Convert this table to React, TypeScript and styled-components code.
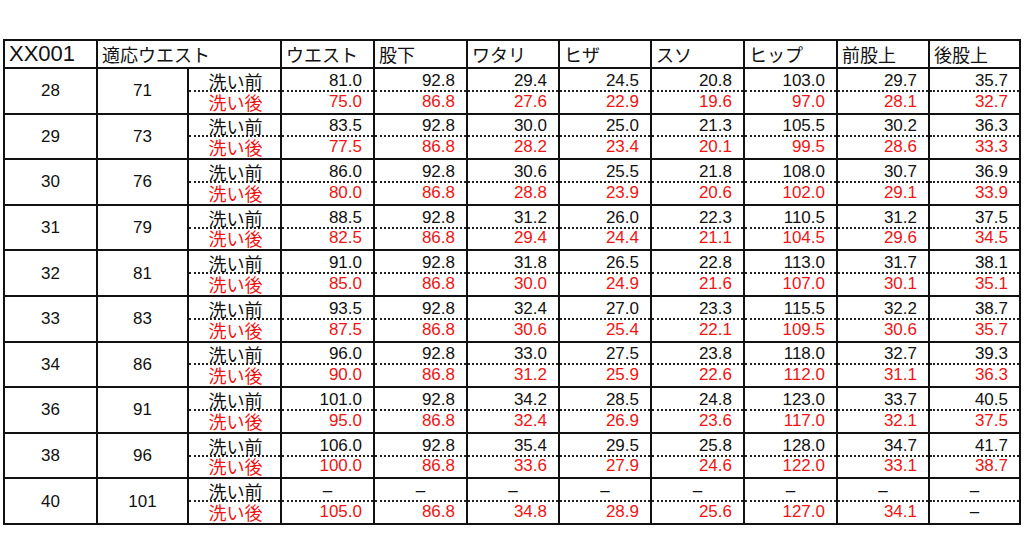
import React from "react"
import styled, {createGlobalStyle} from "styled-components"

const GlobalStyle = createGlobalStyle`
  html, body {
    margin: 0;
    padding: 0;
    background: #fff;
  }
  body {
    font-family: "Liberation Sans", "Noto Sans CJK JP", sans-serif;
    color: #111;
  }
`

const Page = styled.div`
  width: 1024px;
  height: 555px;
  padding: 39px 0 0 3px;
  box-sizing: border-box;
  background: #fff;
  overflow: hidden;
`

const Sheet = styled.table`
  width: 1016px;
  table-layout: fixed;
  border-collapse: collapse;
  border: 2px solid #111;
`

const HeadRow = styled.tr`
  height: 28px;
`

const SubRow = styled.tr`
  height: 22.8px;
`

const HeadCell = styled.th<{$big?: boolean}>`
  border: 2px solid #111;
  padding: 0 0 0 ${(p) => (p.$big ? 4 : 4)}px;
  text-align: left;
  vertical-align: middle;
  font-weight: normal;
  font-family: ${(p) =>
    p.$big
      ? `"Liberation Sans", "Noto Sans CJK JP", sans-serif`
      : `"Noto Sans CJK JP", sans-serif`};
  font-size: ${(p) => (p.$big ? 22 : 18)}px;
  line-height: 1;
  white-space: nowrap;
  overflow: hidden;
  color: #111;
`

const SizeCell = styled.td`
  border: 2px solid #111;
  padding: 0;
  text-align: center;
  vertical-align: middle;
  font-size: 17px;
  line-height: 1;
  color: #111;
`

const LabelCell = styled.td<{$after?: boolean}>`
  border-left: 2px solid #111;
  border-right: 2px solid #111;
  border-top: ${(p) => (p.$after ? "none" : "2px solid #111")};
  border-bottom: ${(p) => (p.$after ? "2px solid #111" : "2px dotted #222")};
  padding: 0 0 ${(p) => (p.$after ? 2 : 0)}px 2px;
  text-align: center;
  vertical-align: bottom;
  font-family: "Noto Sans CJK JP", sans-serif;
  font-size: 18px;
  line-height: 1;
  white-space: nowrap;
  color: ${(p) => (p.$after ? "#f01414" : "#111")};
`

const ValueCell = styled.td<{$after?: boolean; $dash?: boolean}>`
  border-left: 2px solid #111;
  border-right: 2px solid #111;
  border-top: ${(p) => (p.$after ? "none" : "2px solid #111")};
  border-bottom: ${(p) => (p.$after ? "2px solid #111" : "2px dotted #222")};
  padding: 0 ${(p) => (p.$dash ? 0 : 11)}px ${(p) => (p.$after ? 3 : 1)}px 0;
  text-align: ${(p) => (p.$dash ? "center" : "right")};
  vertical-align: bottom;
  font-size: 17px;
  line-height: 1;
  color: ${(p) => (p.$after && !p.$dash ? "#f01414" : "#111")};
`

const headers = ["ウエスト", "股下", "ワタリ", "ヒザ", "スソ", "ヒップ", "前股上", "後股上"]

type Group = {
  size: string
  waist: string
  before: string[]
  after: string[]
}

const groups: Group[] = [
  {size: "28", waist: "71", before: ["81.0", "92.8", "29.4", "24.5", "20.8", "103.0", "29.7", "35.7"], after: ["75.0", "86.8", "27.6", "22.9", "19.6", "97.0", "28.1", "32.7"]},
  {size: "29", waist: "73", before: ["83.5", "92.8", "30.0", "25.0", "21.3", "105.5", "30.2", "36.3"], after: ["77.5", "86.8", "28.2", "23.4", "20.1", "99.5", "28.6", "33.3"]},
  {size: "30", waist: "76", before: ["86.0", "92.8", "30.6", "25.5", "21.8", "108.0", "30.7", "36.9"], after: ["80.0", "86.8", "28.8", "23.9", "20.6", "102.0", "29.1", "33.9"]},
  {size: "31", waist: "79", before: ["88.5", "92.8", "31.2", "26.0", "22.3", "110.5", "31.2", "37.5"], after: ["82.5", "86.8", "29.4", "24.4", "21.1", "104.5", "29.6", "34.5"]},
  {size: "32", waist: "81", before: ["91.0", "92.8", "31.8", "26.5", "22.8", "113.0", "31.7", "38.1"], after: ["85.0", "86.8", "30.0", "24.9", "21.6", "107.0", "30.1", "35.1"]},
  {size: "33", waist: "83", before: ["93.5", "92.8", "32.4", "27.0", "23.3", "115.5", "32.2", "38.7"], after: ["87.5", "86.8", "30.6", "25.4", "22.1", "109.5", "30.6", "35.7"]},
  {size: "34", waist: "86", before: ["96.0", "92.8", "33.0", "27.5", "23.8", "118.0", "32.7", "39.3"], after: ["90.0", "86.8", "31.2", "25.9", "22.6", "112.0", "31.1", "36.3"]},
  {size: "36", waist: "91", before: ["101.0", "92.8", "34.2", "28.5", "24.8", "123.0", "33.7", "40.5"], after: ["95.0", "86.8", "32.4", "26.9", "23.6", "117.0", "32.1", "37.5"]},
  {size: "38", waist: "96", before: ["106.0", "92.8", "35.4", "29.5", "25.8", "128.0", "34.7", "41.7"], after: ["100.0", "86.8", "33.6", "27.9", "24.6", "122.0", "33.1", "38.7"]},
  {size: "40", waist: "101", before: ["–", "–", "–", "–", "–", "–", "–", "–"], after: ["105.0", "86.8", "34.8", "28.9", "25.6", "127.0", "34.1", "–"]},
]

const colWidths = [93, 91, 93, 93, 93, 92, 92, 93, 93, 92, 91]

export default function App() {
  return (
    <Page>
      <GlobalStyle />
      <Sheet>
        <colgroup>
          {colWidths.map((w, i) => (
            <col key={i} style={{width: w}} />
          ))}
        </colgroup>
        <thead>
          <HeadRow>
            <HeadCell $big>XX001</HeadCell>
            <HeadCell colSpan={2}>適応ウエスト</HeadCell>
            {headers.map((h) => (
              <HeadCell key={h}>{h}</HeadCell>
            ))}
          </HeadRow>
        </thead>
        <tbody>
          {groups.map((g) => (
            <React.Fragment key={g.size}>
              <SubRow>
                <SizeCell rowSpan={2}>{g.size}</SizeCell>
                <SizeCell rowSpan={2}>{g.waist}</SizeCell>
                <LabelCell>洗い前</LabelCell>
                {g.before.map((v, i) => (
                  <ValueCell key={i} $dash={v === "–"}>
                    {v}
                  </ValueCell>
                ))}
              </SubRow>
              <SubRow>
                <LabelCell $after>洗い後</LabelCell>
                {g.after.map((v, i) => (
                  <ValueCell key={i} $after $dash={v === "–"}>
                    {v}
                  </ValueCell>
                ))}
              </SubRow>
            </React.Fragment>
          ))}
        </tbody>
      </Sheet>
    </Page>
  )
}
